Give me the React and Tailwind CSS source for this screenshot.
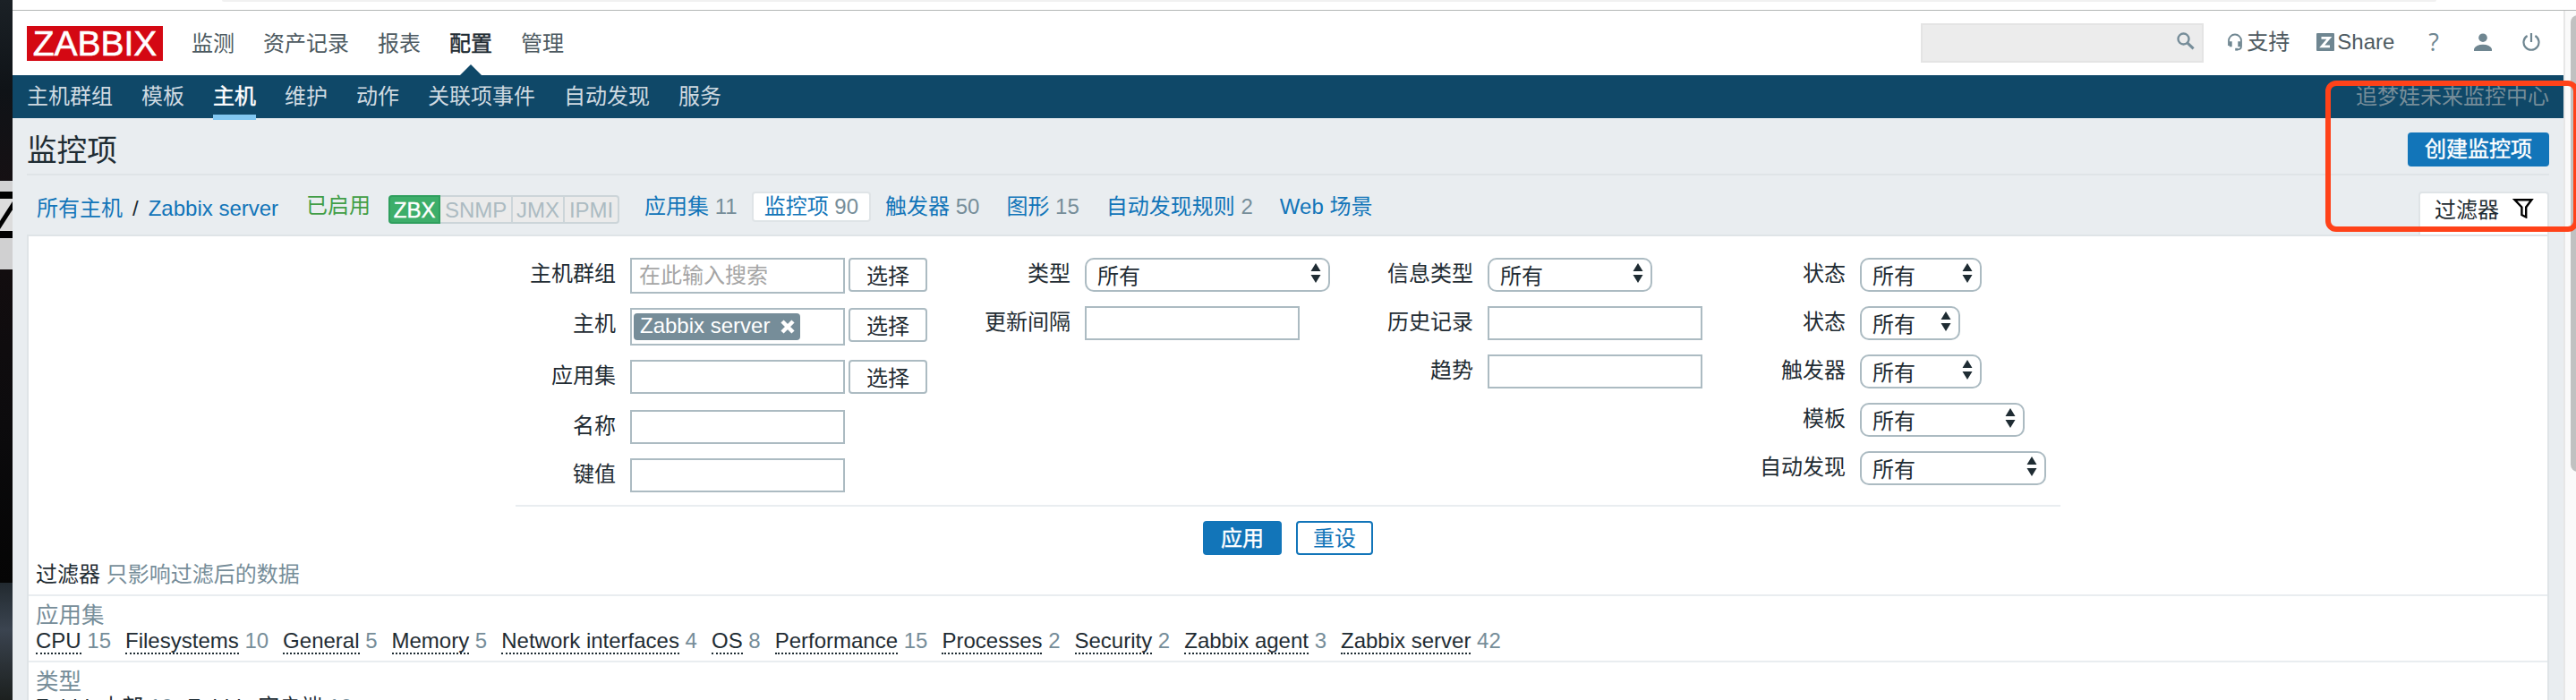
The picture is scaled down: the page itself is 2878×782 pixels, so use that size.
import React from 'react';

const topMenu = ['监测', '资产记录', '报表', '配置', '管理'];

const subMenu = ['主机群组', '模板', '主机', '维护', '动作', '关联项事件', '自动发现', '服务'];

const hostTabs = [
    { label: '应用集', count: 11 },
    { label: '监控项', count: 90, active: true },
    { label: '触发器', count: 50 },
    { label: '图形', count: 15 },
    { label: '自动发现规则', count: 2 },
    { label: 'Web 场景' },
];

const applications = [
    ['CPU', 15],
    ['Filesystems', 10],
    ['General', 5],
    ['Memory', 5],
    ['Network interfaces', 4],
    ['OS', 8],
    ['Performance', 15],
    ['Processes', 2],
    ['Security', 2],
    ['Zabbix agent', 3],
    ['Zabbix server', 42],
];

const itemTypes = [
    ['Zabbix内部', 10],
    ['Zabbix 客户端', 10],
];

const SearchIcon = () => (
    <svg className="h-5 w-5" viewBox="0 0 20 20" fill="none" stroke="#768d99">
        <circle cx="7.5" cy="7.5" r="6" strokeWidth="2.4" />
        <path d="M11.8 11.8L18.6 18.4" strokeWidth="3" />
    </svg>
);

const SupportIcon = () => (
    <svg className="h-5 w-[18px]" viewBox="0 0 18 20" fill="none" stroke="#6f8691">
        <path d="M2 14V8.5a7 7 0 0 1 14 0v6c0 2.6-1.3 3.8-4.3 3.8" strokeWidth="1.8" />
        <path d="M4.2 9.2v6M13.8 9.2v6" strokeWidth="3" />
        <path d="M9.2 18.2h3" strokeWidth="2.8" />
    </svg>
);

const ShareIcon = () => (
    <svg className="h-5 w-5" viewBox="0 0 20 20">
        <rect width="20" height="20" rx="1" fill="#6f8691" />
        <path d="M5.5 5.4h8.8L6.2 14.9h8.8" fill="none" stroke="#fff" strokeWidth="2.8" />
    </svg>
);

const UserIcon = () => (
    <svg className="h-5 w-5" viewBox="0 0 20 20" fill="#6f8691">
        <circle cx="10" cy="5.2" r="4.8" />
        <path d="M0 20v-2.4C1.5 14.4 5 12.8 10 12.8s8.500 1.600 10 4.800V20z" />
    </svg>
);

const PowerIcon = () => (
    <svg className="h-5 w-5" viewBox="0 0 20 20" fill="none" stroke="#6f8691" strokeWidth="2.2">
        <path d="M5.6 3A8.500 8.500 0 1 0 14.400 3" />
        <path d="M10 0v10" />
    </svg>
);

const FunnelIcon = () => (
    <svg className="h-[22px] w-6" viewBox="0 0 24 22" fill="none" stroke="#000" strokeWidth="2.4">
        <path d="M2.6 1.3h18.800l-6.200 8.200v11l-4.800-2.400V9.500z" />
    </svg>
);

const Desktop = () => (
    <div className="w-[14px] shrink-0 overflow-hidden">
        <div className="h-[202px] bg-gradient-to-b from-[#1b2126] via-[#0f1317] to-[#151013]" />
        <div className="h-3 bg-[#d2d2d3]" />
        <div className="h-2 bg-black" />
        <svg className="block h-9 w-[14px] bg-[#dcdcdc]" viewBox="0 0 14 36">
            <path d="M-3 34L17 3" stroke="#000" strokeWidth="5" />
        </svg>
        <div className="h-2 bg-black" />
        <div className="h-[35px] bg-[#d0d0d1]" />
        <div className="h-[350px] bg-gradient-to-b from-[#120d0f] via-[#0c0b0d] to-[#050505]" />
        <div className="h-[131px] bg-gradient-to-b from-[#222a30] via-[#3b4450] via-40% to-[#1c201f]" />
    </div>
);

const Row = ({ label, className = '', children }) => (
    <div className={`flex items-start ${className}`}>
        <label className="mr-4 h-[38px] flex-1 text-right leading-[36px]">{label}</label>
        {children}
    </div>
);

const TextBox = ({ className = 'h-[38px]', children }) => (
    <div className={`w-[240px] shrink-0 border-2 border-[#acbbc2] bg-white ${className}`}>{children}</div>
);

const SelectButton = () => (
    <button className="ml-1 h-[38px] w-[88px] shrink-0 rounded-[4px] border-2 border-[#acbbc2] leading-[37px]">
        选择
    </button>
);

const Select = ({ width = 'w-[136px]' }) => (
    <div className={`flex h-[38px] items-start justify-between rounded-[10px] border-2 border-[#acbbc2] pr-2 pl-3 ${width}`}>
        <span className="leading-[37px]">所有</span>
        <svg className="mt-1 h-[22px] w-3" viewBox="0 0 12 22" fill="#1f2c33">
            <path d="M6 0l5.500 9H.5zM6 22L.5 13h11z" />
        </svg>
    </div>
);

const Subfilter = ({ items }) => (
    <div className="flex gap-4">
        {items.map(([name, count]) => (
            <span key={name} className="whitespace-pre text-[#768d99]">
                <span className="inline-block h-[30px] border-b-2 border-dotted border-[#1f2c33] text-[#1f2c33]">{name}</span>
                {' ' + count}
            </span>
        ))}
    </div>
);

const Header = () => (
    <header className="flex h-[72px] bg-white pl-4">
        <div className="mt-[17px] flex h-[39px] w-[152px] items-center justify-center bg-[#d40813] text-[39px] leading-[39px] text-white [-webkit-text-stroke:0.6px_#fff]">
            ZABBIX
        </div>
        <nav className="ml-4 flex leading-[73px] text-[#4d5a61]">
            {topMenu.map((item) => (
                <div key={item} className={item === '配置' ? 'flex flex-col items-center px-4 text-[#1f2c33] [-webkit-text-stroke:0.5px_#1f2c33]' : 'px-4'}>
                    <span className="block h-[60px]">{item}</span>
                    {item === '配置' && (
                        <svg className="h-3 w-6" viewBox="0 0 24 12" fill="#0f4868">
                            <path d="M0 12L12 0l12 12z" />
                        </svg>
                    )}
                </div>
            ))}
        </nav>
        <div className="mt-[14px] mr-[26px] ml-auto flex h-11 w-[316px] justify-end border-2 border-[#e4e4e4] bg-[#ececec] pt-[8px] pr-[8px]">
            <SearchIcon />
        </div>
        <div className="flex h-[70px] items-center pr-[26px] text-[#4d5a61]">
            <SupportIcon />
            <span className="ml-1">支持</span>
            <span className="ml-[30px]">
                <ShareIcon />
            </span>
            <span className="ml-[3px]">Share</span>
            <span className="ml-[38px] font-['Open_Sans'] text-[27px] text-[#6f8691]">?</span>
            <span className="ml-[39px]">
                <UserIcon />
            </span>
            <span className="ml-[34px]">
                <PowerIcon />
            </span>
        </div>
    </header>
);

const FilterForm = () => (
    <div className="mx-auto flex h-[302px] w-[1726px] border-b-2 border-[#e9edf0] pt-6">
        <div className="flex w-[460px] flex-col">
            <Row label="主机群组" className="h-14">
                <TextBox className="h-10 pl-2 leading-[36px] text-[#a5a5a5]">在此输入搜索</TextBox>
                <SelectButton />
            </Row>
            <Row label="主机" className="h-[58px]">
                <TextBox className="h-[42px] p-0.5 pt-1">
                    <span className="flex h-[30px] w-[186px] items-center rounded-[4px] bg-[#768d99] pl-[7px] leading-[28px] text-white">
                        <span className="h-[30px]">Zabbix server</span>
                        <svg className="ml-3 h-4 w-4" viewBox="0 0 16 16" stroke="#fff" strokeWidth="4.5">
                            <path d="M2 2l12 12M14 2L2 14" />
                        </svg>
                    </span>
                </TextBox>
                <SelectButton />
            </Row>
            <Row label="应用集" className="h-14">
                <TextBox />
                <SelectButton />
            </Row>
            <Row label="名称" className="h-[54px] pr-[92px]">
                <TextBox />
            </Row>
            <Row label="键值" className="pr-[92px]">
                <TextBox />
            </Row>
        </div>
        <div className="ml-[62px] flex w-[388px] flex-col gap-4">
            <Row label="类型">
                <Select width="w-[274px]" />
            </Row>
            <Row label="更新间隔" className="pr-[34px]">
                <TextBox />
            </Row>
        </div>
        <div className="ml-[62px] flex w-[354px] flex-col gap-4">
            <Row label="信息类型">
                <div className="w-[240px]">
                    <Select width="w-[184px]" />
                </div>
            </Row>
            <Row label="历史记录">
                <TextBox />
            </Row>
            <Row label="趋势">
                <TextBox />
            </Row>
        </div>
        <div className="ml-[62px] flex w-[338px] flex-col gap-4">
            <Row label="状态">
                <div className="w-[224px]"><Select /></div>
            </Row>
            <Row label="状态">
                <div className="w-[224px]"><Select width="w-[112px]" /></div>
            </Row>
            <Row label="触发器">
                <div className="w-[224px]"><Select /></div>
            </Row>
            <Row label="模板">
                <div className="w-[224px]"><Select width="w-[184px]" /></div>
            </Row>
            <Row label="自动发现">
                <div className="w-[224px]"><Select width="w-[208px]" /></div>
            </Row>
        </div>
    </div>
);

const App = () => {
    return (
        <div className="relative flex h-[782px] w-[2878px] overflow-hidden font-['Liberation_Sans','Noto_Sans_CJK_SC',sans-serif] text-[24px] leading-[30px] whitespace-nowrap text-[#1f2c33]">
            <Desktop />
            <div className="flex flex-1 flex-col">
                {/* Bottom edge of the browser toolbar */}
                <div className="h-3 shrink-0 border-b border-[#b4b7b6] bg-white">
                    <div className="ml-[234px] h-0.5 w-[2474px] rounded-b-full bg-[#f1f1f1]" />
                </div>
                <div className="flex flex-1">
                    <div className="w-[2850px] bg-[#e9edf0]">
                        <Header />
                        <div className="flex h-12 justify-between bg-[#0f4868] px-4 leading-[48px] text-[#cfdae1]">
                            <nav className="flex gap-8">
                                {subMenu.map((item) => (
                                    <span key={item} className={item === '主机' ? 'h-[50px] border-b-[6px] border-[#82c8f2] text-white [-webkit-text-stroke:0.5px_#fff]' : ''}>
                                        {item}
                                    </span>
                                ))}
                            </nav>
                            <span className="text-[#768d99]">追梦娃未来监控中心</span>
                        </div>

                        <div className="mx-4 flex h-16 justify-between border-b-2 border-[#dfe4e7]">
                            <h1 className="text-[33.6px] leading-[73px]">监控项</h1>
                            <button className="mt-4 h-[38px] w-[158px] rounded-[4px] bg-[#1275b9] leading-[34px] text-white [-webkit-text-stroke:0.4px_#fff]">
                                创建监控项
                            </button>
                        </div>

                        <div className="mx-4 flex h-[66px] items-start pt-[18px]">
                            <div className="ml-[11px] pt-px leading-[35px] text-[#1275b9]">
                                所有主机<span className="mx-[11px] text-[#1f2c33]">/</span>Zabbix server
                            </div>
                            <span className="ml-[31px] leading-[32px] text-[#429e47]">已启用</span>
                            <div className="mt-1 ml-5 flex h-8 text-[#acbbc2]">
                                <span className="w-[58px] rounded-l-[4px] border-2 border-[#2f9f5e] bg-[#3dae6a] text-center leading-[30px] text-white [-webkit-text-stroke:0.4px_#fff]">ZBX</span>
                                <span className="w-[81px] border-y-2 border-r-2 border-[#ccd5d9] bg-[#ebebeb] text-center leading-[30px]">SNMP</span>
                                <span className="w-[58px] border-y-2 border-r-2 border-[#ccd5d9] bg-[#ebebeb] text-center leading-[30px]">JMX</span>
                                <span className="w-[61px] rounded-r-[4px] border-2 border-l-0 border-[#ccd5d9] bg-[#ebebeb] text-center leading-[30px]">IPMI</span>
                            </div>
                            <div className="ml-[14px] flex gap-[2px]">
                                {hostTabs.map((tab) => (
                                    <span
                                        key={tab.label}
                                        className={`h-[34px] rounded-[4px] border-2 px-3 leading-[29px] text-[#1275b9] ${tab.active ? 'border-[#dfe4e7] bg-white' : 'border-transparent'}`}
                                    >
                                        {tab.label}
                                        {tab.count && <span className="text-[#768d99]"> {tab.count}</span>}
                                    </span>
                                ))}
                            </div>
                            <div className="ml-auto flex h-12 w-[146px] rounded-t-[4px] border-2 border-b-0 border-[#dfe4e7] bg-white pl-4 leading-[37px]">
                                过滤器
                                <span className="mt-[6px] ml-[15px]">
                                    <FunnelIcon />
                                </span>
                            </div>
                        </div>

                        <main className="mx-4 h-[540px] border-2 border-[#dfe4e7] bg-white">
                            <FilterForm />
                            <div className="flex h-[56px] justify-center gap-4 pt-4">
                                <button className="h-[38px] w-[88px] rounded-[4px] bg-[#1275b9] leading-[39px] text-white [-webkit-text-stroke:0.4px_#fff]">应用</button>
                                <button className="h-[38px] w-[86px] rounded-[4px] border-2 border-[#1275b9] leading-[36px] text-[#1275b9]">重设</button>
                            </div>
                            <div className="h-11 border-b-2 border-[#e9edf0] pl-2 leading-[40px]">
                                过滤器 <span className="text-[#768d99]">只影响过滤后的数据</span>
                            </div>
                            <div className="h-[74px] border-b-2 border-[#e9edf0] pt-[7px] pl-2">
                                <h3 className="h-[28px] text-[25.5px] leading-[29px] text-[#768d99]">应用集</h3>
                                <Subfilter items={applications} />
                            </div>
                            <div className="pt-[7px] pl-2">
                                <h3 className="h-[28px] text-[25.5px] leading-[29px] text-[#768d99]">类型</h3>
                                <Subfilter items={itemTypes} />
                            </div>
                        </main>
                    </div>
                    <aside className="w-[14px] overflow-hidden border-l-2 border-[#e7e7e7] bg-[#fafafa] pt-[5px] pl-[6px]">
                        <div className="h-[510px] w-4 rounded-full bg-[#c1c1c1]" />
                    </aside>
                </div>
            </div>

            {/* Highlight around the create button */}
            <div className="absolute top-[90px] left-[2598px] h-[169px] w-[283px] rounded-[12px] border-[6px] border-[#ff4219]" />
        </div>
    );
};

export default App;
